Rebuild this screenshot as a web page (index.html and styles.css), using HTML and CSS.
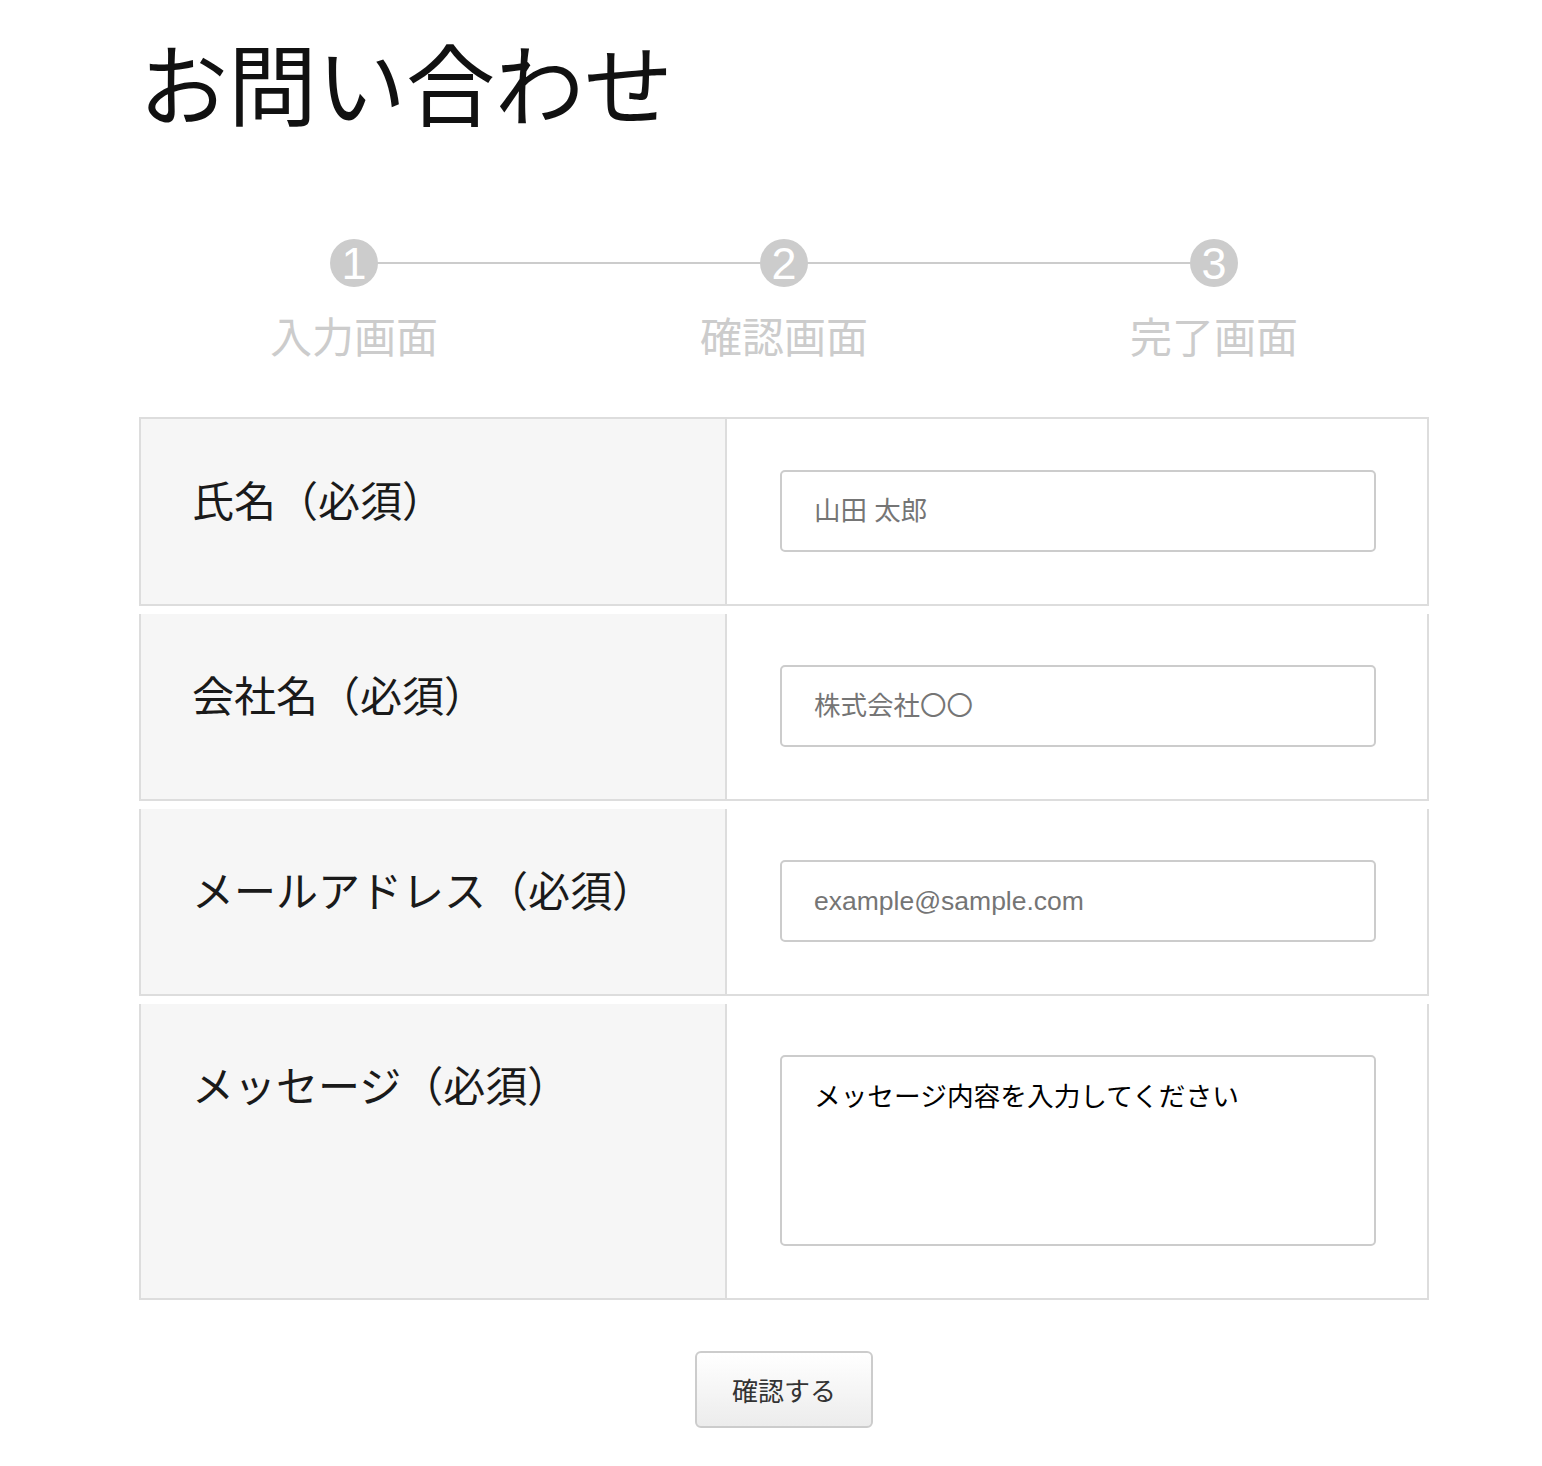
FILE: index.html
```html
<!DOCTYPE html>
<html lang="ja">
<head>
<meta charset="utf-8">
<title>お問い合わせ</title>
<link rel="stylesheet" href="styles.css">
</head>
<body>
<div class="page">
  <h1 class="title">お問い合わせ</h1>
  <ol class="steps">
    <li class="step"><span class="num">1</span><span class="step-label">入力画面</span></li>
    <li class="step"><span class="num">2</span><span class="step-label">確認画面</span></li>
    <li class="step"><span class="num">3</span><span class="step-label">完了画面</span></li>
  </ol>
  <form class="form">
    <div class="row">
      <div class="label">氏名（必須）</div>
      <div class="field"><input class="input" type="text" placeholder="山田 太郎"></div>
    </div>
    <div class="row">
      <div class="label">会社名（必須）</div>
      <div class="field"><input class="input" type="text" placeholder="株式会社〇〇"></div>
    </div>
    <div class="row">
      <div class="label">メールアドレス（必須）</div>
      <div class="field"><input class="input" type="email" placeholder="example@sample.com"></div>
    </div>
    <div class="row">
      <div class="label">メッセージ（必須）</div>
      <div class="field"><textarea class="textarea">メッセージ内容を入力してください</textarea></div>
    </div>
    <div class="actions"><button class="btn" type="button">確認する</button></div>
  </form>
</div>
</body>
</html>
```
FILE: styles.css
```css
body {
  margin: 8px;
  background: #fff;
  font-family: "Noto Sans CJK JP", sans-serif;
  color: #1a1a1a;
}

.page {
  width: 1290px;
  margin-left: 131px;
}

.title {
  margin: 28px 0 0;
  font-size: 89px;
  line-height: 1;
  font-weight: normal;
  color: #111;
}

.steps {
  list-style: none;
  margin: 114px 0 0;
  padding: 0;
  display: grid;
  grid-template-columns: repeat(3, 1fr);
  position: relative;
}

.steps::before {
  content: "";
  position: absolute;
  top: 23px;
  left: 16.67%;
  right: 16.67%;
  height: 2px;
  background: #cccccc;
}

.step {
  display: flex;
  flex-direction: column;
  align-items: center;
  position: relative;
}

.num {
  width: 48px;
  height: 48px;
  border-radius: 50%;
  background: #cccccc;
  color: #fff;
  display: flex;
  align-items: center;
  justify-content: center;
  font-family: "Liberation Sans", sans-serif;
  font-size: 45px;
  line-height: 1;
}

.step-label {
  margin-top: 27px;
  font-size: 42px;
  line-height: 1;
  color: #cccccc;
}

.form {
  margin-top: 61px;
}

.row {
  display: grid;
  grid-template-columns: 586px 1fr;
  border: 2px solid #dddddd;
  border-top: 0;
  margin-top: 8px;
}

.row:first-child {
  border-top: 2px solid #dddddd;
  margin-top: 0;
}

.label {
  background: #f6f6f6;
  border-right: 2px solid #dddddd;
  padding: 59px 0 0 51px;
  font-size: 42px;
  line-height: 1;
  color: #1a1a1a;
}

.field {
  padding: 51px 51px 52px 53px;
}

.input,
.textarea {
  display: block;
  box-sizing: border-box;
  width: 100%;
  border: 2px solid #cccccc;
  border-radius: 5px;
  background: #fff;
  font-family: "Liberation Sans", "Noto Sans CJK JP", sans-serif;
  font-size: 26.5px;
  color: #111;
  margin: 0;
  outline: none;
}

.input {
  height: 82px;
  padding: 0 32px;
}

.input::placeholder {
  color: #757575;
}

.textarea {
  height: 191px;
  padding: 18px 32px;
  line-height: 1.5;
  resize: none;
  color: #000;
  font-family: "Noto Sans CJK JP", sans-serif;
  font-size: 26.7px;
}

.actions {
  display: flex;
  justify-content: center;
  margin-top: 51px;
}

.btn {
  height: 77px;
  padding: 0 35px;
  border: 2px solid #cccccc;
  border-radius: 6px;
  background: linear-gradient(#ffffff, #ececec);
  font-family: "Noto Sans CJK JP", sans-serif;
  font-size: 26px;
  color: #333;
  cursor: pointer;
}
```
